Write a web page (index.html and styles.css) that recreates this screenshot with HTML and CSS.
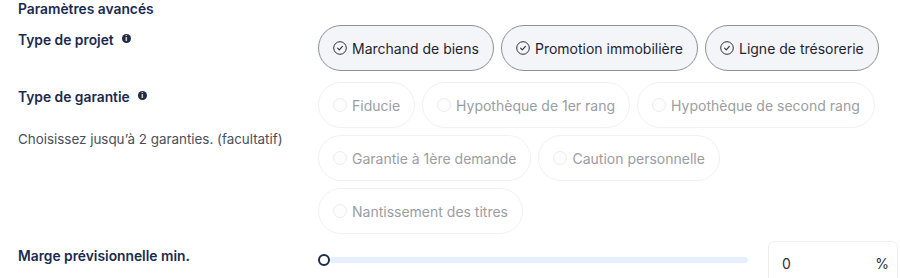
FILE: index.html
```html
<!DOCTYPE html>
<html lang="fr">
<head>
<meta charset="utf-8">
<link rel="stylesheet" href="styles.css">
</head>
<body>
<div class="page">
  <h2 class="title">Paramètres avancés</h2>

  <div class="row row-project">
    <div class="label-col">
      <div class="label">Type de projet <span class="info">i</span></div>
    </div>
    <div class="chips">
      <span class="chip on"><span class="check"><svg viewBox="0 0 14 14" width="14" height="14"><circle cx="7" cy="7" r="6.3" fill="none" stroke="#2b3040" stroke-width="1"/><path d="M4.6 7.2 L6.3 8.8 L9.4 5.4" fill="none" stroke="#2b3040" stroke-width="1.1" stroke-linecap="round" stroke-linejoin="round"/></svg></span>Marchand de biens</span>
      <span class="chip on"><span class="check"><svg viewBox="0 0 14 14" width="14" height="14"><circle cx="7" cy="7" r="6.3" fill="none" stroke="#2b3040" stroke-width="1"/><path d="M4.6 7.2 L6.3 8.8 L9.4 5.4" fill="none" stroke="#2b3040" stroke-width="1.1" stroke-linecap="round" stroke-linejoin="round"/></svg></span>Promotion immobilière</span>
      <span class="chip on"><span class="check"><svg viewBox="0 0 14 14" width="14" height="14"><circle cx="7" cy="7" r="6.3" fill="none" stroke="#2b3040" stroke-width="1"/><path d="M4.6 7.2 L6.3 8.8 L9.4 5.4" fill="none" stroke="#2b3040" stroke-width="1.1" stroke-linecap="round" stroke-linejoin="round"/></svg></span>Ligne de trésorerie</span>
    </div>
  </div>

  <div class="row row-guarantee">
    <div class="label-col">
      <div class="label">Type de garantie <span class="info">i</span></div>
      <p class="hint">Choisissez jusqu’à 2 garanties. (facultatif)</p>
    </div>
    <div class="chips">
      <span class="chip off"><span class="radio"></span>Fiducie</span>
      <span class="chip off"><span class="radio"></span>Hypothèque de 1er rang</span>
      <span class="chip off"><span class="radio"></span>Hypothèque de second rang</span>
      <span class="chip off"><span class="radio"></span>Garantie à 1ère demande</span>
      <span class="chip off"><span class="radio"></span>Caution personnelle</span>
      <span class="chip off"><span class="radio"></span>Nantissement des titres</span>
    </div>
  </div>

  <div class="row row-marge">
    <div class="label-col">
      <div class="label">Marge prévisionnelle min.</div>
    </div>
    <div class="marge">
      <div class="slider"><span class="thumb"></span><span class="track"></span></div>
      <div class="field"><span class="val">0</span><span class="unit">%</span></div>
    </div>
  </div>
</div>
</body>
</html>
```

FILE: styles.css
```css
* { box-sizing: border-box; }
html, body { margin: 0; padding: 0; background: #ffffff; }
body {
  font-family: "Inter", "Noto Sans", sans-serif;
  color: #1b2a4e;
  width: 900px;
  height: 278px;
  overflow: hidden;
}
.page { padding: 1px 0 0 18px; }
.title {
  margin: 0;
  font-size: 13.8px;
  line-height: 17px;
  font-weight: 600;
  color: #1b2a4e;
}
.row {
  display: grid;
  grid-template-columns: 300px 1fr;
}
.row-project { margin-top: 7px; }
.row-guarantee { margin-top: 11px; }
.row-marge { margin-top: 7px; }
.label-col { padding-top: 7px; }
.label {
  font-size: 13.8px;
  line-height: 17px;
  font-weight: 600;
  color: #1b2a4e;
  display: flex;
  align-items: center;
}
.info {
  display: inline-flex;
  align-items: center;
  justify-content: center;
  width: 9px;
  height: 9px;
  border-radius: 50%;
  background: #1b2a4e;
  color: #fff;
  font-size: 7px;
  font-weight: 700;
  line-height: 1;
  margin-left: 8px;
  margin-top: -4px;
}
.hint {
  margin: 25px 0 0;
  font-size: 13.4px;
  line-height: 16px;
  color: #4a4f5c;
  font-weight: 400;
}
.chips {
  display: flex;
  flex-wrap: wrap;
  column-gap: 7px;
  row-gap: 7px;
  align-content: flex-start;
}
.row-guarantee .chips { width: 560px; }
.chip {
  display: inline-flex;
  align-items: center;
  height: 46px;
  padding: 0 14px;
  border-radius: 23px;
  font-size: 14px;
  white-space: nowrap;
}
.chip.on {
  border: 1px solid #8a909e;
  background: #f4f5f8;
  color: #1f2433;
}
.chip.off {
  border: 1px solid #f1f1f3;
  background: #ffffff;
  color: #9b9da3;
}
.check { display: inline-flex; margin-right: 5px; }
.radio {
  width: 14px;
  height: 14px;
  border-radius: 50%;
  border: 1px solid #ededf0;
  margin-right: 5px;
  background: #fdfdfd;
}
.marge {
  display: flex;
  align-items: flex-start;
}
.slider {
  position: relative;
  width: 431px;
  height: 24px;
  margin-top: 7px;
  display: flex;
  align-items: center;
}
.track {
  display: block;
  margin-left: 12px;
  width: 418px;
  height: 6px;
  border-radius: 3px;
  background: #e7eefc;
}
.thumb {
  position: absolute;
  left: 0;
  top: 6px;
  width: 12px;
  height: 12px;
  border-radius: 50%;
  border: 2px solid #1b2a4e;
  background: #fff;
  z-index: 1;
}
.field {
  margin-left: 19px;
  width: 130px;
  height: 44px;
  border: 1px solid #eeeff2;
  border-radius: 6px;
  display: flex;
  align-items: center;
  justify-content: space-between;
  padding: 0 8px 0 13px;
  font-size: 14px;
  color: #2a2f3b;
}
```
